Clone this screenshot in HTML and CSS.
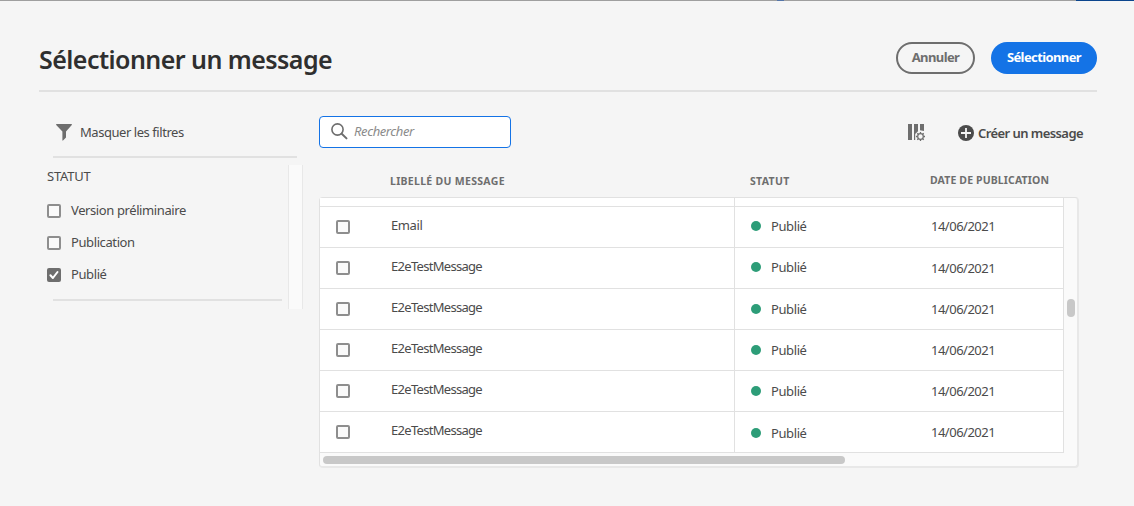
FILE: index.html
```html
<!DOCTYPE html>
<html lang="fr">
<head>
<meta charset="utf-8">
<title>Sélectionner un message</title>
<link rel="stylesheet" href="styles.css">
</head>
<body>
<div class="backdrop"><span class="seg-a"></span><span class="seg-b"></span><span class="seg-c"></span></div>
<main class="dialog">
  <header class="header">
    <h1 class="title"><span>Sélectionner un message</span></h1>
    <button class="btn btn-cancel"><span>Annuler</span></button>
    <button class="btn btn-primary"><span>Sélectionner</span></button>
  </header>
  <div class="body">
    <aside class="filters">
      <div class="filter-toggle">
        <svg width="16" height="17" viewBox="0 0 16 17"><path d="M.6 0h14.800c.5 0 .7.5.4.9L10 7.500v6l-3 3c-.3.300-.6.100-.6-.3V7.500L.2.900C-.1.500.1 0 .6 0z" fill="#6e6e6e"/></svg>
        <span class="toggle-text">Masquer les filtres</span>
      </div>
      <div class="filter-scroll">
        <div class="filter-list">
          <div class="group-title">STATUT</div>
          <label class="option"><span class="check"></span><span class="o1">Version préliminaire</span></label>
          <label class="option"><span class="check"></span><span class="o2">Publication</span></label>
          <label class="option"><span class="check checked"><svg width="14" height="14" viewBox="0 0 14 14"><path d="M3.400 7.300l2.500 2.700 4.600-6" fill="none" stroke="#fff" stroke-width="2" stroke-linecap="round" stroke-linejoin="round"/></svg></span><span class="o3">Publié</span></label>
        </div>
        <div class="track"></div>
      </div>
    </aside>
    <section class="content">
      <div class="toolbar">
        <div class="search">
          <svg width="17" height="17" viewBox="0 0 17 17"><circle cx="6.500" cy="6.500" r="5.600" fill="none" stroke="#6e6e6e" stroke-width="1.600"/><path d="M10.700 10.700l4.800 4.700" stroke="#6e6e6e" stroke-width="2" stroke-linecap="round"/></svg>
          <span class="placeholder">Rechercher</span>
        </div>
        <svg class="columns" width="18" height="18" viewBox="0 0 18 18"><path d="M0 0h4v16H0zM6 0h4v7.200L7.200 10v6H6zM12 0h4v7l-4-.8z" fill="#6e6e6e"/><g fill="none" stroke="#6e6e6e"><circle cx="12.500" cy="12.500" r="2.800" stroke-width="1.200"/><path d="M12.500 8v1.500M12.500 15.500v1.500M8 12.500h1.500M15.500 12.500h1.500M9.300 9.300l1.200 1.200M14.500 14.500l1.200 1.200M9.300 15.700l1.200-1.200M14.500 10.500l1.200-1.200" stroke-width="1.300"/></g></svg>
        <div class="create">
          <svg width="16" height="16" viewBox="0 0 16 16"><circle cx="8" cy="8" r="8" fill="#4b4b4b"/><path d="M8 3v10M3 8h10" stroke="#f5f5f5" stroke-width="1.800"/></svg>
          <span class="create-text">Créer un message</span>
        </div>
      </div>
      <div class="thead"><span class="h1">LIBELLÉ DU MESSAGE</span><span class="h2">STATUT</span><span class="h3">DATE DE PUBLICATION</span></div>
      <div class="table">
        <div class="rows">
          <div class="row sliver"><div class="cell-name"></div><div class="cell-status"></div></div>
          <div class="row"><div class="cell-name"><span class="check"></span><span class="email">Email</span></div><div class="cell-status"><i class="dot"></i><span class="status">Publié</span></div><div class="date">14/06/2021</div></div>
          <div class="row"><div class="cell-name"><span class="check"></span><span class="name">E2eTestMessage</span></div><div class="cell-status"><i class="dot"></i><span class="status">Publié</span></div><div class="date low">14/06/2021</div></div>
          <div class="row"><div class="cell-name"><span class="check"></span><span class="name">E2eTestMessage</span></div><div class="cell-status low"><i class="dot"></i><span class="status">Publié</span></div><div class="date low">14/06/2021</div></div>
          <div class="row"><div class="cell-name"><span class="check"></span><span class="name">E2eTestMessage</span></div><div class="cell-status low"><i class="dot"></i><span class="status">Publié</span></div><div class="date low">14/06/2021</div></div>
          <div class="row"><div class="cell-name"><span class="check"></span><span class="name">E2eTestMessage</span></div><div class="cell-status low"><i class="dot"></i><span class="status">Publié</span></div><div class="date low">14/06/2021</div></div>
          <div class="row"><div class="cell-name"><span class="check"></span><span class="name">E2eTestMessage</span></div><div class="cell-status lower"><i class="dot"></i><span class="status">Publié</span></div><div class="date low">14/06/2021</div></div>
        </div>
        <div class="vbar"><div class="vthumb"></div></div>
        <div class="hbar"><div class="hthumb"></div></div>
      </div>
    </section>
  </div>
</main>
</body>
</html>
```
FILE: styles.css
```css
* { box-sizing: border-box; }
body { margin: 0; width: 1134px; height: 506px; overflow: hidden; background: #f5f5f5; color: #4b4b4b; font: 13px/20px "Noto Sans", "Open Sans", sans-serif; }
svg { display: block; flex: none; }
span { white-space: nowrap; }
.backdrop { display: flex; height: 1px; background: #9f9f9f; }
.seg-a { width: 777px; }
.seg-b { width: 7px; background: #5475a8; margin-right: 292px; }
.seg-c { flex: 1; background: #0b458d; }
.dialog { padding: 33px 37px 0 39px; }
.header { display: flex; align-items: center; height: 58px; padding-bottom: 8px; border-bottom: 2px solid #e1e1e1; }
.title { flex: 1; margin: 2px 0 0; font-size: 25px; line-height: 36px; font-weight: 600; color: #2f2f2f; letter-spacing: -.55px; }
.btn { display: flex; align-items: center; justify-content: center; height: 32px; margin: 0; padding: 0 0 2px; border-radius: 16px; font: 700 13px/20px "Noto Sans", sans-serif; letter-spacing: -.6px; }
.btn-cancel { width: 79px; border: 2px solid #6e6e6e; background: transparent; color: #6e6e6e; margin-right: 16px; }
.btn-primary { width: 106px; border: 0; background: #1473e6; color: #fff; }
.body { display: flex; }
.filters { width: 280px; }
.filter-toggle { display: flex; gap: 8px; height: 66px; width: 244px; margin-left: 14px; padding: 32px 0 0 3px; border-bottom: 2px solid #e1e1e1; }
.toggle-text { line-height: 18px; margin-top: -1px; letter-spacing: -.45px; }
.filter-scroll { display: flex; justify-content: space-between; width: 264px; height: 144px; margin-top: 7px; }
.filter-list { width: 243px; padding-left: 8px; height: 136px; display: flex; flex-direction: column; background: linear-gradient(#e1e1e1,#e1e1e1) 14px 100% / 229px 2px no-repeat; }
.group-title { line-height: 22px; margin-bottom: 7px; letter-spacing: -.2px; }
.option { display: flex; align-items: center; gap: 10px; height: 32px; }
.check { flex: none; width: 14px; height: 14px; border: 2px solid #8e8e8e; border-radius: 2px; background: #fafafa; }
.check.checked { border: 0; background: #6e6e6e; }
.option .check { margin-top: 1px; }
.track { width: 15px; background: #fafafa; border: 1px solid #e8e8e8; border-width: 0 1px; }
.content { width: 760px; }
.toolbar { display: flex; height: 57px; padding-top: 24px; }
.search { flex: none; display: flex; gap: 6px; width: 192px; height: 32px; padding: 6px 0 0 11px; border: 1px solid #1473e6; border-radius: 4px; background: #fff; }
.placeholder { line-height: 18px; margin-top: -1px; font-style: italic; color: #8b8b8b; letter-spacing: -.4px; }
.columns { margin: 8px 0 0 397px; }
.create { display: flex; gap: 4px; margin: 9px 0 0 32px; }
.create-text { font-weight: 600; line-height: 16px; letter-spacing: -.57px; }
.thead { display: grid; grid-template-columns: 360px 180px 1fr; height: 48px; padding: 23px 0 0 71px; font-size: 10.5px; font-weight: 700; line-height: 18px; color: #6e6e6e; letter-spacing: .3px; }
.h3 { margin-top: -1px; letter-spacing: .13px; }
.table { display: grid; grid-template: 255px 13px / 744px 14px; width: 760px; height: 271px; border: 1px solid #e1e1e1; border-right-width: 2px; border-bottom-width: 2px; border-right-color: #e8e8e8; border-bottom-color: #e8e8e8; border-radius: 4px; background: #fafafa; }
.rows { background: #fff; border-right: 1px solid #e1e1e1; }
.row { display: grid; grid-template-columns: 415px 196px 1fr; height: 41px; border-bottom: 1px solid #e1e1e1; }
.row.sliver { height: 9px; }
.cell-name { display: flex; align-items: center; padding-left: 16px; border-right: 1px solid #e1e1e1; }
.cell-name span:last-child { margin: -4px 0 0 41px; }
.cell-name .check { margin-top: -1px; }
.cell-name span.name:last-child { margin-top: -5px; }
.sliver .cell-name { height: 8px; }
.cell-status { display: flex; align-items: center; padding-left: 16px; gap: 10px; }
.dot { width: 10px; height: 10px; margin-top: -2px; border-radius: 50%; background: #2d9d78; }
.status { margin-top: -2px; }
.date { line-height: 38px; letter-spacing: -.5px; }
.low { padding-top: 1px; }
.lower { padding-top: 3px; }
.email, .name, .status, .o1, .o2, .o3 { letter-spacing: -.4px; }
.name { letter-spacing: -.7px; }
.vbar { padding: 101px 0 0 3px; }
.vthumb { width: 8px; height: 18px; border-radius: 4px; background: #c8c8c8; }
.hbar { padding: 3px 0 0 3px; }
.hthumb { width: 522px; height: 8px; border-radius: 4px; background: #c8c8c8; }
```
